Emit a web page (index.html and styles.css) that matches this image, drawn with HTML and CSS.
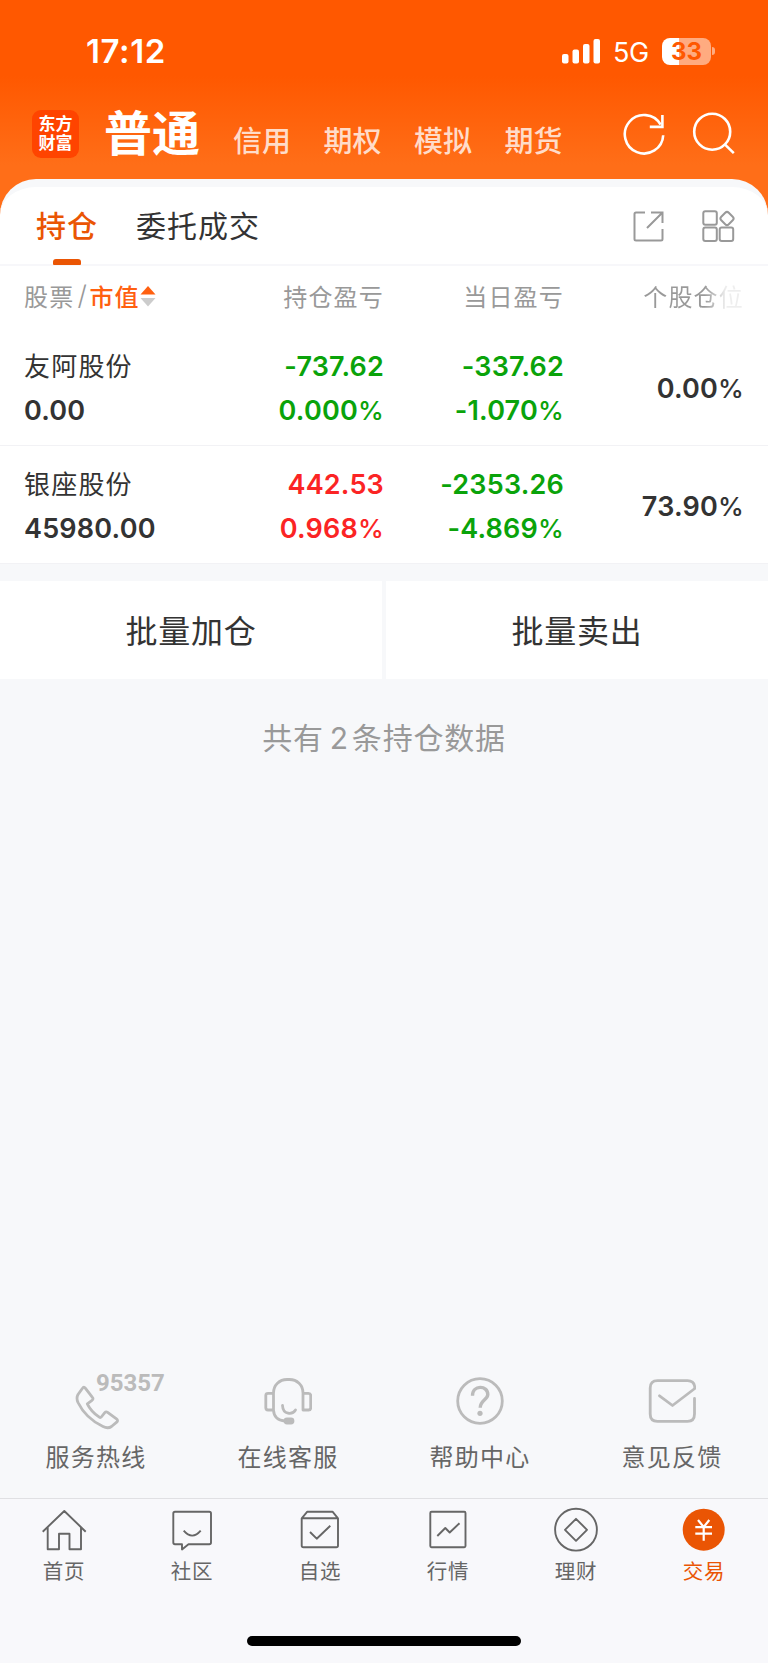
FILE: index.html
```
<!DOCTYPE html>
<html lang="zh-CN">
<head>
    <meta charset="UTF-8">
    <meta name="viewport" content="width=device-width, initial-scale=1.0">
    <title>东方财富 - 交易</title>
    <link rel="stylesheet" href="styles.css">
</head>
<body>
    <div class="app">
        <header class="header">
            <div class="status-bar">
                <span class="time">17:12</span>
                <div class="status-right">
                    <svg class="signal" width="39" height="25" viewBox="0 0 39 25" fill="#fff">
                        <rect x="0" y="15" width="6.5" height="9.5" rx="2"/>
                        <rect x="10.5" y="10.5" width="6.5" height="14" rx="2"/>
                        <rect x="21" y="5" width="6.5" height="19.5" rx="2"/>
                        <rect x="31.5" y="0" width="6.5" height="24.5" rx="2"/>
                    </svg>
                    <span class="network">5G</span>
                    <div class="battery">33</div>
                    <span class="battery-cap"></span>
                </div>
            </div>
            <div class="nav">
                <div class="logo"><span>东方</span><span>财富</span></div>
                <a class="nav-item active">普通</a>
                <a class="nav-item">信用</a>
                <a class="nav-item">期权</a>
                <a class="nav-item">模拟</a>
                <a class="nav-item">期货</a>
                <div class="nav-icons">
                    <svg width="44" height="44" viewBox="0 0 44 44" fill="none" stroke="#fff" stroke-width="2.6">
                        <path d="M41.2 23.2A19.2 19.2 0 1 1 38.6 12.6"/>
                        <path d="M40.4 3V14.9H27.8"/>
                    </svg>
                    <svg width="44" height="44" viewBox="0 0 44 44" fill="none" stroke="#fff" stroke-width="2.6">
                        <circle cx="20.2" cy="19.7" r="18"/>
                        <path d="M32.8 32.3L41.8 41.2"/>
                    </svg>
                </div>
            </div>
        </header>

        <main class="panel">
            <div class="tabs">
                <a class="tab active">持仓</a>
                <a class="tab">委托成交</a>
                <div class="tab-icons">
                    <svg width="32" height="32" viewBox="0 0 32 32" fill="none" stroke="#999" stroke-width="2">
                        <path d="M13 2.5H4A1.5 1.5 0 0 0 2.5 4V29A1.5 1.5 0 0 0 4 30.5H29A1.5 1.5 0 0 0 30.5 29V19"/>
                        <path d="M19 2.5H30.5V13M30.5 2.5L15 18"/>
                    </svg>
                    <svg width="34" height="34" viewBox="0 0 34 34" fill="none" stroke="#999" stroke-width="2">
                        <rect x="2.3" y="2.3" width="13.5" height="13.5" rx="2"/>
                        <rect x="2.3" y="18.5" width="13.5" height="13.5" rx="2"/>
                        <rect x="18.7" y="18.5" width="13.5" height="13.5" rx="2"/>
                        <rect x="20.7" y="4.2" width="10.6" height="10.6" rx="2.5" transform="rotate(45 26 9.5)"/>
                    </svg>
                </div>
            </div>

            <div class="row table-head">
                <div class="sort">股票<i>/</i><b>市值</b>
                    <svg width="16" height="22" viewBox="0 0 16 22">
                        <path d="M0.5 9.5L8 1L15.5 9.5Z" fill="#ff6010"/>
                        <path d="M0.5 13L8 21.5L15.5 13Z" fill="#ccc"/>
                    </svg>
                </div>
                <div>持仓盈亏</div>
                <div>当日盈亏</div>
                <div class="fade">个股仓位</div>
            </div>

            <div class="row stock">
                <div><p class="name">友阿股份</p><p>0.00</p></div>
                <div class="down"><p>-737.62</p><p>0.000<em>%</em></p></div>
                <div class="down"><p>-337.62</p><p>-1.070<em>%</em></p></div>
                <div><p>0.00<em>%</em></p></div>
            </div>
            <div class="row stock">
                <div><p class="name">银座股份</p><p>45980.00</p></div>
                <div class="up"><p>442.53</p><p>0.968<em>%</em></p></div>
                <div class="down"><p>-2353.26</p><p>-4.869<em>%</em></p></div>
                <div><p>73.90<em>%</em></p></div>
            </div>
        </main>

        <div class="batch">
            <button>批量加仓</button>
            <button>批量卖出</button>
        </div>
        <p class="summary">共有<span>2</span>条持仓数据</p>

        <section class="services">
            <a class="service">
                <svg width="48" height="54" viewBox="0 0 48 54">
                    <path d="M10.5 11.2Q11.8 9.2 13.3 11.2L20.4 20.3Q21.8 22 20 23.3L15.3 26.8Q19 34.5 27.3 40.2Q28.5 41 29.3 40L32.8 35.7Q34 34.2 35.6 35.4L44.5 41.9Q46.5 43.5 44.7 45.2L39.5 49.5Q36 52 31 49.6Q13.5 41 6 25.5Q4 21 6 17.5Z"/>
                </svg>
                <span class="hotline">95357</span>
                服务热线
            </a>
            <a class="service">
                <svg width="48" height="54" viewBox="0 0 48 54">
                    <path d="M9.5 33V16C9.5 8 15.5 2.5 23 2.5H25.5C33 2.5 39 8 39 16V33H44.5Q46.7 33 46.7 30.8V18.5Q46.7 16.3 44.5 16.3H39M9.5 16.3H4Q1.8 16.3 1.8 18.5V30.8Q1.8 33 4 33H9.5C9.8 39 13.5 43.5 21 44"/>
                    <path d="M18.5 28.5C19 38 28.5 38 31.5 33"/>
                    <rect x="21" y="42" width="8" height="4" rx="2" fill="#bbb"/>
                </svg>
                在线客服
            </a>
            <a class="service">
                <svg width="48" height="54" viewBox="0 0 48 54">
                    <circle cx="24" cy="24" r="22.3"/>
                    <path class="thick" d="M16.5 18.8C16.5 7.500 31.800 8 31.800 17.500C31.800 22.500 24.200 23.500 24.200 30.800"/>
                    <circle class="dot" cx="24" cy="36.3" r="2.6"/>
                </svg>
                帮助中心
            </a>
            <a class="service">
                <svg width="48" height="54" viewBox="0 0 48 54">
                    <path d="M46.500 21.500V37Q46.500 44.300 39.500 44.300H9.500Q2.200 44.300 2.200 37V11Q2.200 3.700 9.500 3.700H39.500Q46.800 3.700 46.800 11.500L24.500 28.500L11.500 18.800"/>
                </svg>
                意见反馈
            </a>
        </section>

        <footer class="footer">
            <nav class="tab-bar">
                <a>
                    <svg width="48" height="48" viewBox="0 0 48 48"><path d="M2.7 25.7L24.3 5L45.7 25.7M7.7 21.5V43.3H19V27.7H29.5V43.3H41V21.5"/></svg>
                    首页
                </a>
                <a>
                    <svg width="48" height="48" viewBox="0 0 48 48"><path d="M7 5.7H41.3Q43 5.7 43 7.4V36.6Q43 38.3 41.3 38.3H20.5L14 43.5V38.3H7Q5.3 38.3 5.3 36.6V7.4Q5.3 5.7 7 5.7ZM15.7 24.7Q24.2 34.5 32.7 24.7"/></svg>
                    社区
                </a>
                <a>
                    <svg width="48" height="48" viewBox="0 0 48 48"><path d="M5.7 12.3L11.3 5.7H36.5L42 12.3V39.5Q42 41.3 40.2 41.3H7.5Q5.7 41.3 5.7 39.5ZM5.7 12.3H42M14 26L20.7 32.7L34.3 19.7"/></svg>
                    自选
                </a>
                <a>
                    <svg width="48" height="48" viewBox="0 0 48 48"><rect x="6.3" y="5.7" width="35.2" height="35.6" rx="1.2"/><path d="M13.3 30L21.3 22L25.7 26.5L35.5 17.2"/></svg>
                    行情
                </a>
                <a>
                    <svg width="48" height="48" viewBox="0 0 48 48"><circle cx="24" cy="23.7" r="20.9"/><path d="M24 12.8L35 23.8L24 34.8L13 23.8Z"/></svg>
                    理财
                </a>
                <a class="active">
                    <svg width="48" height="48" viewBox="0 0 48 48"><circle class="coin" cx="23.7" cy="23.7" r="21"/><path class="yen" d="M18 14L23.7 21L29.3 14M23.7 21V34.8M15.3 21.2H32M15.3 27.7H32"/></svg>
                    交易
                </a>
            </nav>
            <div class="home-indicator"></div>
        </footer>
    </div>
</body>
</html>
```
FILE: styles.css
```
* {
    box-sizing: border-box;
}

body {
    margin: 0;
    font-family: Inter, "Noto Sans CJK SC", sans-serif;
    background-color: #f7f8fa;
    color: #333;
}

p {
    margin: 0;
}

svg {
    display: block;
    flex-shrink: 0;
}

.app {
    width: 768px;
    height: 1663px;
    display: flex;
    flex-direction: column;
    overflow: hidden;
}

/* 顶部 */
.header {
    height: 220px;
    background: linear-gradient(#ff5800 0, #ff5800 76px, #ff6e18 165px);
    color: #fff;
}

.status-bar {
    display: flex;
    justify-content: space-between;
    align-items: center;
    height: 102px;
    padding: 0 53px 0 86px;
}

.time {
    font-size: 33px;
    font-weight: 600;
    letter-spacing: 0.6px;
}

.status-right {
    display: flex;
    align-items: center;
}

.network {
    margin: 2px 0 0 12px;
    width: 49px;
    font-size: 27px;
    letter-spacing: -0.5px;
}

.battery {
    width: 49px;
    height: 27px;
    border-radius: 8px;
    background: linear-gradient(to right, #fff 34%, #ffab80 34%);
    color: #ff5800;
    font-size: 24px;
    line-height: 27px;
    font-weight: 700;
    text-align: center;
}

.battery-cap {
    width: 3px;
    height: 8px;
    margin-left: 1px;
    border-radius: 0 4px 4px 0;
    background-color: #ffab80;
}

.nav {
    display: flex;
    align-items: center;
    height: 64px;
    padding-left: 32px;
}

.logo {
    width: 47px;
    height: 48px;
    margin-right: 25px;
    padding-top: 5px;
    border-radius: 9px;
    background-color: #ff4400;
    font-size: 17px;
    line-height: 19px;
    font-weight: 700;
    text-align: center;
}

.logo span {
    display: block;
}

.nav-item {
    width: 90.5px;
    margin-top: 16px;
    font-size: 29px;
    line-height: 32px;
    font-weight: 500;
    color: #ffdcc9;
}

.nav-item.active {
    width: 129px;
    margin-top: 0;
    font-size: 48px;
    line-height: 56px;
    font-weight: 700;
    color: #fff;
}

.nav-icons {
    display: flex;
    gap: 25.5px;
    margin-left: 27px;
}

/* 持仓面板 */
.panel {
    margin-top: -41px;
    height: 385px;
    border-top: 8px solid #f7f8fa;
    border-radius: 36px 36px 0 0;
    background-color: #fff;
}

.tabs {
    display: flex;
    height: 79px;
    padding: 0 33px 0 36px;
    border-bottom: 2px solid #f7f7fa;
}

.tab {
    position: relative;
    margin-right: 38px;
    padding-top: 1px;
    font-size: 30px;
    line-height: 77px;
    letter-spacing: 1px;
}

.tab.active {
    color: #ea5504;
    font-weight: 500;
}

.tab.active::after {
    content: "";
    position: absolute;
    left: 17px;
    bottom: -1px;
    width: 28px;
    height: 6px;
    border-radius: 3px 3px 1px 1px;
    background-color: #ea5504;
}

.tab-icons {
    display: flex;
    align-items: center;
    gap: 37px;
    margin-left: auto;
}

.row {
    display: grid;
    grid-template-columns: 200px 160px 180px 180px;
    align-items: center;
    padding-left: 24px;
    text-align: right;
}

.row > :first-child {
    text-align: left;
}

.table-head {
    height: 62px;
    padding-bottom: 3px;
    font-size: 24px;
    letter-spacing: 1.2px;
    color: #999;
}

.sort {
    display: flex;
    align-items: center;
}

.sort i {
    width: 15px;
    padding-left: 3px;
    font-style: normal;
    font-size: 27px;
    font-weight: 300;
}

.sort b {
    font-weight: 500;
    color: #ff6010;
}

.fade {
    background: linear-gradient(to right, #999 78%, #eee 90%);
    background-clip: text;
    color: transparent;
}

.stock {
    height: 118px;
    padding-top: 5px;
    border-bottom: 1px solid #f2f2f5;
    font-size: 27px;
    line-height: 44px;
    font-weight: 600;
    letter-spacing: 0.2px;
}

.stock .name {
    font-size: 26px;
    letter-spacing: 1.2px;
    font-weight: 400;
}

.stock em {
    font-style: normal;
    font-weight: 500;
    font-size: 26px;
}

.up {
    color: #fb2424;
}

.down {
    color: #0aa30a;
}

/* 批量操作 */
.batch {
    display: grid;
    grid-template-columns: 1fr 1fr;
    gap: 4px;
    margin-top: 17px;
}

.batch button {
    height: 98px;
    padding: 0 0 3px;
    border: none;
    background-color: #fff;
    color: #333;
    font-family: inherit;
    font-size: 32px;
    letter-spacing: 0.7px;
}

.summary {
    margin-top: 37px;
    text-align: center;
    font-size: 30px;
    line-height: 44px;
    letter-spacing: 0.8px;
    color: #999;
}

.summary span {
    margin: 0 3px 0 6px;
}

/* 客服入口 */
.services {
    display: grid;
    grid-template-columns: repeat(4, 192px);
    margin-top: auto;
    height: 121px;
}

.service {
    position: relative;
    display: flex;
    flex-direction: column;
    align-items: center;
    font-size: 24px;
    line-height: 54px;
    letter-spacing: 1.2px;
    color: #666;
}

.service svg {
    fill: none;
    stroke: #bbb;
    stroke-width: 2.8;
    stroke-linecap: round;
    stroke-linejoin: round;
}

.service .thick {
    stroke-width: 3.4;
    stroke-linecap: butt;
}

.service .dot {
    fill: #bbb;
    stroke: none;
}

.hotline {
    position: absolute;
    left: 96px;
    top: -6px;
    font-family: Roboto, sans-serif;
    font-size: 24px;
    line-height: 24px;
    font-weight: 700;
    letter-spacing: 0;
    color: #bbb;
}

/* 底部导航 */
.footer {
    height: 165px;
    border-top: 1px solid #e0e0e3;
    background-color: #f8f8fb;
}

.tab-bar {
    display: grid;
    grid-template-columns: repeat(6, 128px);
    padding-top: 7px;
}

.tab-bar a {
    display: flex;
    flex-direction: column;
    align-items: center;
    font-size: 20.5px;
    line-height: 36px;
    letter-spacing: 0.8px;
    color: #666;
}

.tab-bar a.active {
    color: #ea5504;
}

.tab-bar svg {
    fill: none;
    stroke: #666;
    stroke-width: 1.9;
    stroke-linejoin: round;
}

.tab-bar .coin {
    fill: #ea5504;
    stroke: none;
}

.tab-bar .yen {
    stroke: #fff;
    stroke-width: 2.2;
}

.home-indicator {
    width: 274px;
    height: 10px;
    margin: 46px auto 0;
    border-radius: 5px;
    background-color: #000;
}
```
